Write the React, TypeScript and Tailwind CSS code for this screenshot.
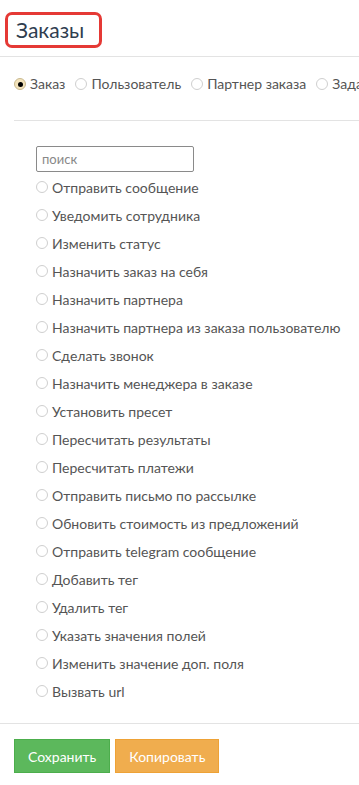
import React, { useState } from 'react';

const actions = [
  'Отправить сообщение',
  'Уведомить сотрудника',
  'Изменить статус',
  'Назначить заказ на себя',
  'Назначить партнера',
  'Назначить партнера из заказа пользователю',
  'Сделать звонок',
  'Назначить менеджера в заказе',
  'Установить пресет',
  'Пересчитать результаты',
  'Пересчитать платежи',
  'Отправить письмо по рассылке',
  'Обновить стоимость из предложений',
  'Отправить telegram сообщение',
  'Добавить тег',
  'Удалить тег',
  'Указать значения полей',
  'Изменить значение доп. поля',
  'Вызвать url',
];

const targets = ['Заказ', 'Пользователь', 'Партнер заказа', 'Задача'];

function Radio({ checked }: { checked?: boolean }) {
  return (
    <span
      className={
        'inline-flex items-center justify-center w-[12px] h-[12px] rounded-full border shrink-0 ' +
        (checked ? 'border-[#c9b98f] bg-[#f3e3bb]' : 'border-[#cfcfcf] bg-white')
      }
    >
      {checked && <span className="w-[5px] h-[5px] rounded-full bg-black" />}
    </span>
  );
}

export default function App() {
  const [target, setTarget] = useState('Заказ');
  const [action, setAction] = useState('');
  const [query, setQuery] = useState('');

  return (
    <div className="w-[359px] min-h-[785px] bg-white text-[#555] overflow-hidden" style={{ fontFamily: 'Lato, "Open Sans", sans-serif' }}>
      <div className="px-[5px] pt-[12px] pb-[8px] border-b border-[#e3e3e3]">
        <div className="inline-block border-[3px] border-[#e53935] rounded-[7px] pl-[8px] pr-[15px] pt-[2px] pb-[3px]">
          <h1 className="text-[21px] leading-[25px] text-[#2f3d4f] font-normal">Заказы</h1>
        </div>
      </div>

      <div className="pl-[14px]">
        <div className="flex gap-[10px] whitespace-nowrap pt-[19px] pb-[28px] border-b border-[#e3e3e3]">
          {targets.map(t => (
            <label key={t} className="flex items-center gap-[4px] text-[14px] leading-[16px] cursor-pointer" onClick={() => setTarget(t)}>
              <Radio checked={target === t} />
              <span>{t}</span>
            </label>
          ))}
        </div>

        <div className="pl-[22px] pt-[25px]">
          <input
            value={query}
            onChange={e => setQuery(e.target.value)}
            placeholder="поиск"
            className="w-[158px] h-[26px] border border-[#8a8a8a] rounded-[2px] px-[5px] text-[13px] placeholder:text-[#888] outline-none"
          />
          <div className="mt-[1px] pb-[18px]">
            {actions
              .filter(a => a.toLowerCase().includes(query.toLowerCase()))
              .map(a => (
                <label key={a} className="flex items-center gap-[4px] h-[28px] text-[14px] cursor-pointer" onClick={() => setAction(a)}>
                  <Radio checked={action === a} />
                  <span>{a}</span>
                </label>
              ))}
          </div>
        </div>
      </div>

      <div className="border-t border-[#e3e3e3] px-[14px] pt-[15px] flex gap-[5px]">
        <button className="h-[34px] px-[13px] bg-[#5cb85c] border border-[#4cae4c] text-white text-[14px]">Сохранить</button>
        <button className="h-[34px] px-[13px] bg-[#f0ad4e] border border-[#eea236] text-white text-[14px]">Копировать</button>
      </div>
    </div>
  );
}
